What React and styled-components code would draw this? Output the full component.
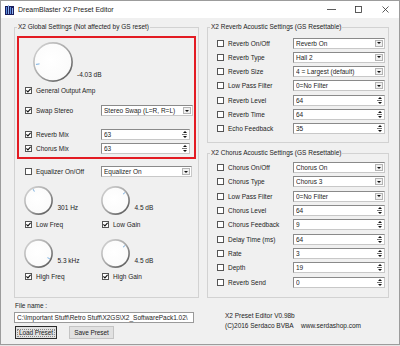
import React from "react";
import styled, { createGlobalStyle } from "styled-components";

const GlobalStyle = createGlobalStyle`
  * { box-sizing: border-box; }
  html, body { margin: 0; padding: 0; background: #e6e6e6; }
  body {
    font-family: "Liberation Sans", Arial, sans-serif;
    font-size: 6.5px;
    color: #1c1c1c;
  }
`;

const Window = styled.div`
  width: 400px;
  height: 345px;
  border: 1px solid #9c9c9c;
  background: #f0f0f0;
  display: flex;
  flex-direction: column;
  overflow: hidden;
`;

const TitleBar = styled.div`
  height: 17px;
  flex-shrink: 0;
  background: #fff;
  display: flex;
  align-items: center;
`;

const AppIcon = styled.svg`
  margin-left: 4px;
  width: 9px;
  height: 10px;
  flex-shrink: 0;
`;

const TitleText = styled.div`
  margin-left: 4px;
  flex: 1;
  font-size: 7px;
  line-height: 17px;
  white-space: nowrap;
`;

const CaptionButton = styled.div`
  width: 27px;
  height: 17px;
  display: flex;
  align-items: center;
  justify-content: center;
`;

const Client = styled.div`
  flex: 1;
  display: flex;
  gap: 8px;
  padding: 5px 0 0 13px;
`;

const Column = styled.div`
  width: ${(p) => p.$w}px;
  display: flex;
  flex-direction: column;
`;

const GroupBox = styled.fieldset`
  margin: 0;
  margin-top: ${(p) => p.$mt || 0}px;
  padding: 0;
  min-width: 0;
  border: 1px solid #d2d2d2;
  height: ${(p) => p.$h}px;
  flex-shrink: 0;
`;

const Legend = styled.legend`
  margin-left: 2px;
  padding: 0 1px;
  font-size: 6.5px;
  line-height: 8px;
  white-space: nowrap;
`;

const GroupBody = styled.div`
  display: flex;
  flex-direction: column;
  gap: ${(p) => p.$gap || 0}px;
  padding: ${(p) => p.$pad};
`;

const Highlight = styled.div`
  margin: 5px 2px 0;
  border: 2px solid #e31b23;
  padding: 4px 0 3px 0;
  display: flex;
  flex-direction: column;
`;

const KnobRow = styled.div`
  display: flex;
  align-items: flex-end;
  padding-left: ${(p) => p.$pl}px;
`;

const KnobValue = styled.span`
  margin-left: ${(p) => p.$ml || 4.5}px;
  margin-bottom: ${(p) => p.$mb || 3}px;
  line-height: 8px;
  white-space: nowrap;
`;

const Row = styled.div`
  display: flex;
  align-items: center;
  height: 11px;
  margin-top: ${(p) => p.$mt || 0}px;
  padding-left: ${(p) => p.$pl || 0}px;
`;

const CheckLabel = styled.label`
  display: flex;
  align-items: center;
  width: 76px;
  flex-shrink: 0;
  white-space: nowrap;
`;

const Box = styled.span`
  width: 7px;
  height: 7px;
  margin-right: 4px;
  flex-shrink: 0;
  background: #fff;
  border: 1px solid #555;
  display: flex;
  align-items: center;
  justify-content: center;
`;

const Field = styled.div`
  width: ${(p) => p.$w}px;
  height: 11px;
  background: #fff;
  border: 1px solid #8a8a8a;
  border-right-color: #c8c8c8;
  border-bottom-color: #c8c8c8;
  display: flex;
  align-items: center;
  padding-left: 2px;
  white-space: nowrap;
  overflow: hidden;
  line-height: 9px;
`;

const FieldText = styled.span`
  flex: 1;
  overflow: hidden;
`;

const DropButton = styled.span`
  width: 8px;
  height: 7px;
  margin-right: 1px;
  flex-shrink: 0;
  background: #f0f0f0;
  border: 1px solid #b4b4b4;
  display: flex;
  align-items: center;
  justify-content: center;
`;

const Arrow = styled.span`
  width: 0;
  height: 0;
  border-left: 2px solid transparent;
  border-right: 2px solid transparent;
  ${(p) =>
    p.$up ? "border-bottom: 2px solid #111;" : "border-top: 2px solid #111;"}
`;

const SpinButtons = styled.span`
  width: 7px;
  height: 9px;
  margin-right: 1px;
  flex-shrink: 0;
  display: flex;
  flex-direction: column;
  align-items: center;
  justify-content: center;
  gap: 1px;
`;

const SpinSep = styled.span`
  width: 5px;
  height: 1px;
  background: #777;
`;

const KnobGrid = styled.div`
  display: grid;
  grid-template-columns: 77px 77px;
  margin-top: ${(p) => p.$mt || 0}px;
  padding-left: 9px;
`;

const CheckGrid = styled.div`
  display: grid;
  grid-template-columns: 77px 77px;
  height: 11px;
  align-items: center;
  margin-top: ${(p) => p.$mt || 0}px;
  padding-left: 10px;
`;

const KnobCell = styled.div`
  display: flex;
  align-items: flex-end;
`;

const Caption = styled.div`
  line-height: 10px;
  margin-top: ${(p) => p.$mt || 0}px;
  padding-left: ${(p) => p.$pl || 0}px;
  white-space: nowrap;
`;

const PathInput = styled(Field)`
  margin-top: 1px;
  border: 1px solid #9a9a9a;
`;

const ButtonRow = styled.div`
  display: flex;
  gap: 12px;
  margin-top: 3px;
  padding-left: 1px;
`;

const Button = styled.div`
  width: ${(p) => p.$w}px;
  height: 13px;
  display: flex;
  align-items: center;
  justify-content: center;
  background: #e1e1e1;
  border: 1px solid ${(p) => (p.$default ? "#2a2a2a" : "#c4c4c4")};
  position: relative;
  white-space: nowrap;
  letter-spacing: -0.1px;
  &::after {
    content: "";
    display: ${(p) => (p.$default ? "block" : "none")};
    position: absolute;
    inset: 1.5px 1px;
    border: 1px dotted #8a8a8a;
  }
`;

const InfoBlock = styled.div`
  margin-top: 13px;
  padding-left: 18px;
`;

const InfoLine = styled.div`
  display: flex;
  line-height: 10px;
  white-space: nowrap;
`;

const InfoCell = styled.span`
  width: ${(p) => (p.$w ? `${p.$w}px` : "auto")};
`;

function CheckMark() {
  return (
    <svg width="5" height="5" viewBox="0 0 5 5">
      <path d="M0.4 2.4 L1.9 3.9 L4.6 0.8" fill="none" stroke="#111" strokeWidth="1.1" />
    </svg>
  );
}

function Check({ checked, children, width }) {
  return (
    <CheckLabel style={width ? { width } : undefined}>
      <Box>{checked && <CheckMark />}</Box>
      {children}
    </CheckLabel>
  );
}

function Select({ value, w = 92 }) {
  return (
    <Field $w={w}>
      <FieldText>{value}</FieldText>
      <DropButton>
        <Arrow />
      </DropButton>
    </Field>
  );
}

function Spin({ value, w = 92 }) {
  return (
    <Field $w={w}>
      <FieldText>{value}</FieldText>
      <SpinButtons>
        <Arrow $up />
        <SpinSep />
        <Arrow />
      </SpinButtons>
    </Field>
  );
}

let gid = 0;
function Knob({ size, angle }) {
  const id = React.useMemo(() => `k${gid++}`, []);
  const r = size / 2;
  const a = ((angle - 90) * Math.PI) / 180;
  const r1 = r * 0.68;
  const r2 = r * 0.86;
  return (
    <svg width={size} height={size} viewBox={`0 0 ${size} ${size}`}>
      <defs>
        <linearGradient id={`${id}s`} x1="0" y1="0" x2="1" y2="1">
          <stop offset="0" stopColor="#d8d8d8" />
          <stop offset="0.5" stopColor="#a8a8a8" />
          <stop offset="1" stopColor="#4a4a4a" />
        </linearGradient>
        <radialGradient id={`${id}f`} cx="0.45" cy="0.45" r="0.6">
          <stop offset="0" stopColor="#ffffff" />
          <stop offset="0.85" stopColor="#fbfbfb" />
          <stop offset="1" stopColor="#ececec" />
        </radialGradient>
      </defs>
      <circle cx={r} cy={r} r={r - 0.9} fill={`url(#${id}f)`} stroke={`url(#${id}s)`} strokeWidth="1.6" />
      <line
        x1={r + Math.cos(a) * r1}
        y1={r + Math.sin(a) * r1}
        x2={r + Math.cos(a) * r2}
        y2={r + Math.sin(a) * r2}
        stroke="#6aa6dc"
        strokeWidth="0.9"
      />
    </svg>
  );
}

const reverbRows = [
  ["Reverb On/Off", "sel", "Reverb On"],
  ["Reverb Type", "sel", "Hall 2"],
  ["Reverb Size", "sel", "4 = Largest (default)"],
  ["Low Pass Filter", "sel", "0=No Filter"],
  ["Reverb Level", "spin", "64"],
  ["Reverb Time", "spin", "64"],
  ["Echo Feedback", "spin", "35"],
];

const chorusRows = [
  ["Chorus On/Off", "sel", "Chorus On"],
  ["Chorus Type", "sel", "Chorus 3"],
  ["Low Pass Filter", "sel", "0=No Filter"],
  ["Chorus Level", "spin", "64"],
  ["Chorus Feedback", "spin", "9"],
  ["Delay Time (ms)", "spin", "64"],
  ["Rate", "spin", "3"],
  ["Depth", "spin", "19"],
  ["Reverb Send", "spin", "0"],
];

function SettingRow({ label, kind, value }) {
  return (
    <Row>
      <Check>{label}</Check>
      {kind === "sel" ? <Select value={value} /> : <Spin value={value} />}
    </Row>
  );
}

export default function App() {
  return (
    <>
      <GlobalStyle />
      <Window>
        <TitleBar>
          <AppIcon viewBox="0 0 9 10">
            <rect x="0" y="1" width="9" height="9" fill="#1b1f5e" />
            <rect x="1" y="2" width="1" height="7" fill="#5b8fe0" />
            <rect x="3" y="0" width="1" height="9" fill="#8fb4f0" />
            <rect x="5" y="2" width="1" height="7" fill="#5b8fe0" />
            <rect x="7" y="3" width="1" height="6" fill="#8fb4f0" />
          </AppIcon>
          <TitleText>DreamBlaster X2 Preset Editor</TitleText>
          <CaptionButton>
            <svg width="9" height="3" viewBox="0 0 9 3">
              <line x1="0" y1="1.5" x2="9" y2="1.5" stroke="#333" strokeWidth="0.8" />
            </svg>
          </CaptionButton>
          <CaptionButton>
            <svg width="7" height="7" viewBox="0 0 7 7">
              <rect x="0.5" y="0.5" width="6" height="6" fill="none" stroke="#333" strokeWidth="0.8" />
            </svg>
          </CaptionButton>
          <CaptionButton>
            <svg width="7" height="7" viewBox="0 0 7 7">
              <path d="M0.5 0.5 L6.5 6.5 M6.5 0.5 L0.5 6.5" stroke="#333" strokeWidth="0.8" />
            </svg>
          </CaptionButton>
        </TitleBar>

        <Client>
          <Column $w={185}>
            <GroupBox $h={275}>
              <Legend>X2 Global Settings (Not affected by GS reset)</Legend>
              <Highlight>
                <KnobRow $pl={14}>
                  <Knob size={40} angle={262} />
                  <KnobValue $ml={4} $mb={3}>-4.03 dB</KnobValue>
                </KnobRow>
                <Row $mt={3} $pl={6}>
                  <Check checked width="auto">General Output Amp</Check>
                </Row>
                <Row $mt={9} $pl={6}>
                  <Check checked>Swap Stereo</Check>
                  <Select value="Stereo Swap (L=R, R=L)" w={92} />
                </Row>
                <Row $mt={13} $pl={6}>
                  <Check checked>Reverb Mix</Check>
                  <Spin value="63" w={89} />
                </Row>
                <Row $mt={3} $pl={6}>
                  <Check checked>Chorus Mix</Check>
                  <Spin value="63" w={89} />
                </Row>
              </Highlight>
              <Row $mt={7} $pl={10}>
                <Check>Equalizer On/Off</Check>
                <Select value="Equalizer On" w={91} />
              </Row>
              <KnobGrid $mt={9}>
                <KnobCell>
                  <Knob size={29} angle={335} />
                  <KnobValue $mb={3}>301 Hz</KnobValue>
                </KnobCell>
                <KnobCell>
                  <Knob size={29} angle={50} />
                  <KnobValue $mb={3}>4.5 dB</KnobValue>
                </KnobCell>
              </KnobGrid>
              <CheckGrid $mt={4}>
                <Check checked>Low Freq</Check>
                <Check checked>Low Gain</Check>
              </CheckGrid>
              <KnobGrid $mt={9}>
                <KnobCell>
                  <Knob size={29} angle={115} />
                  <KnobValue $mb={3}>5.3 kHz</KnobValue>
                </KnobCell>
                <KnobCell>
                  <Knob size={29} angle={50} />
                  <KnobValue $mb={3}>4.5 dB</KnobValue>
                </KnobCell>
              </KnobGrid>
              <CheckGrid $mt={3}>
                <Check checked>High Freq</Check>
                <Check checked>High Gain</Check>
              </CheckGrid>
            </GroupBox>

            <Caption $mt={3} $pl={1}>File name :</Caption>
            <PathInput $w={180}>
              <FieldText>C:\Important Stuff\Retro Stuff\X2GS\X2_SoftwarePack1.02\</FieldText>
            </PathInput>
            <ButtonRow>
              <Button $w={42} $default>Load Preset</Button>
              <Button $w={45}>Save Preset</Button>
            </ButtonRow>
          </Column>

          <Column $w={182}>
            <GroupBox $h={120}>
              <Legend>X2 Reverb Acoustic Settings (GS Resettable)</Legend>
              <GroupBody $gap={3.33} $pad="6.5px 0 0 9px">
                {reverbRows.map(([l, k, v]) => (
                  <SettingRow key={l} label={l} kind={k} value={v} />
                ))}
              </GroupBody>
            </GroupBox>
            <GroupBox $h={149} $mt={6}>
              <Legend>X2 Chorus Acoustic Settings (GS Resettable)</Legend>
              <GroupBody $gap={3.33} $pad="5px 0 0 9px">
                {chorusRows.map(([l, k, v]) => (
                  <SettingRow key={l} label={l} kind={k} value={v} />
                ))}
              </GroupBody>
            </GroupBox>
            <InfoBlock>
              <InfoLine>X2 Preset Editor V0.98b</InfoLine>
              <InfoLine>
                <InfoCell $w={76}>(C)2016 Serdaco BVBA</InfoCell>
                <InfoCell>www.serdashop.com</InfoCell>
              </InfoLine>
            </InfoBlock>
          </Column>
        </Client>
      </Window>
    </>
  );
}
